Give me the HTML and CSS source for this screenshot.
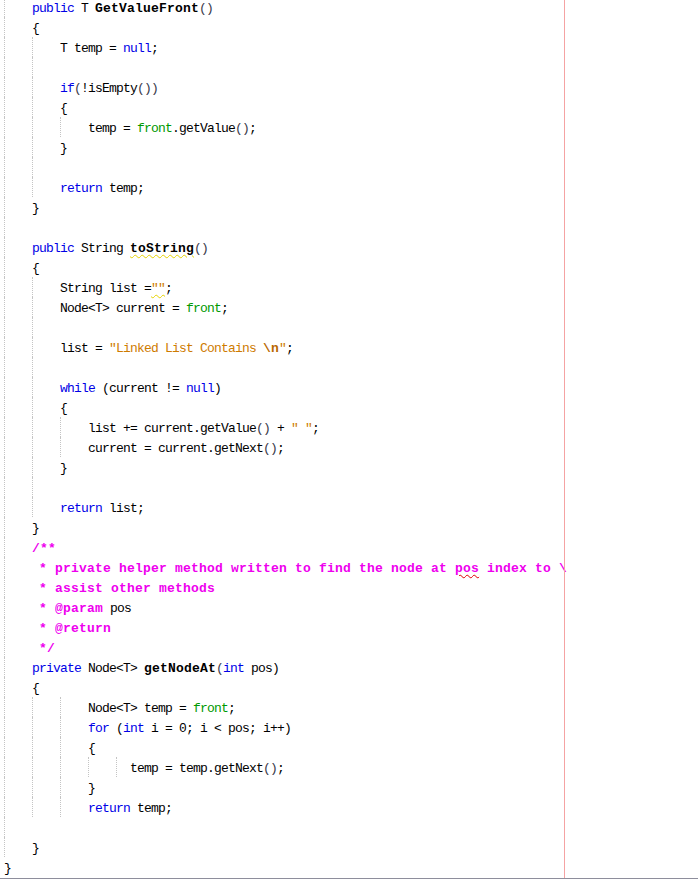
FILE: index.html
```html
<!DOCTYPE html>
<html>
<head>
<meta charset="utf-8">
<link rel="stylesheet" href="styles.css">
</head>
<body>
<div class="editor">
  <div class="code">
    <div class="ln"><span class="c g"></span><span class="t"><span class="kw">public</span> T <span class="b">GetValueFront</span><span class="p">()</span></span></div>
    <div class="ln"><span class="c g"></span><span class="t">{</span></div>
    <div class="ln"><span class="c g"></span><span class="c g"></span><span class="t">T temp = <span class="kw">null</span>;</span></div>
    <div class="ln"><span class="c g"></span><span class="c g"></span><span class="t"></span></div>
    <div class="ln"><span class="c g"></span><span class="c g"></span><span class="t"><span class="kw">if</span><span class="p">(</span>!isEmpty<span class="p">())</span></span></div>
    <div class="ln"><span class="c g"></span><span class="c g"></span><span class="t">{</span></div>
    <div class="ln"><span class="c g"></span><span class="c g"></span><span class="c g"></span><span class="t">temp = <span class="fd">front</span>.getValue<span class="p">()</span>;</span></div>
    <div class="ln"><span class="c g"></span><span class="c g"></span><span class="t">}</span></div>
    <div class="ln"><span class="c g"></span><span class="c g"></span><span class="t"></span></div>
    <div class="ln"><span class="c g"></span><span class="c g"></span><span class="t"><span class="kw">return</span> temp;</span></div>
    <div class="ln"><span class="c g"></span><span class="t">}</span></div>
    <div class="ln"><span class="c g"></span><span class="t"></span></div>
    <div class="ln"><span class="c g"></span><span class="t"><span class="kw">public</span> String <span class="b warn">toString</span><span class="p">()</span></span></div>
    <div class="ln"><span class="c g"></span><span class="t">{</span></div>
    <div class="ln"><span class="c g"></span><span class="c g"></span><span class="t">String list =<span class="st warn">""</span>;</span></div>
    <div class="ln"><span class="c g"></span><span class="c g"></span><span class="t">Node&lt;T&gt; current = <span class="fd">front</span>;</span></div>
    <div class="ln"><span class="c g"></span><span class="c g"></span><span class="t"></span></div>
    <div class="ln"><span class="c g"></span><span class="c g"></span><span class="t">list = <span class="st">"Linked List Contains <span class="esc">\n</span>"</span>;</span></div>
    <div class="ln"><span class="c g"></span><span class="c g"></span><span class="t"></span></div>
    <div class="ln"><span class="c g"></span><span class="c g"></span><span class="t"><span class="kw">while</span> (current != <span class="kw">null</span>)</span></div>
    <div class="ln"><span class="c g"></span><span class="c g"></span><span class="t">{</span></div>
    <div class="ln"><span class="c g"></span><span class="c g"></span><span class="c g"></span><span class="t">list += current.getValue<span class="p">()</span> + <span class="st">" "</span>;</span></div>
    <div class="ln"><span class="c g"></span><span class="c g"></span><span class="c g"></span><span class="t">current = current.getNext<span class="p">()</span>;</span></div>
    <div class="ln"><span class="c g"></span><span class="c g"></span><span class="t">}</span></div>
    <div class="ln"><span class="c g"></span><span class="c g"></span><span class="t"></span></div>
    <div class="ln"><span class="c g"></span><span class="c g"></span><span class="t"><span class="kw">return</span> list;</span></div>
    <div class="ln"><span class="c g"></span><span class="t">}</span></div>
    <div class="ln"><span class="c g"></span><span class="t"><span class="cm">/**</span></span></div>
    <div class="ln"><span class="c g"></span><span class="t"><span class="cmn"> </span><span class="cm">* private helper method written to find the node at <span class="err">pos</span> index to \</span></span></div>
    <div class="ln"><span class="c g"></span><span class="t"><span class="cmn"> </span><span class="cm">* assist other methods</span></span></div>
    <div class="ln"><span class="c g"></span><span class="t"><span class="cmn"> </span><span class="cm">* @param</span> pos</span></div>
    <div class="ln"><span class="c g"></span><span class="t"><span class="cmn"> </span><span class="cm">* @return</span></span></div>
    <div class="ln"><span class="c g"></span><span class="t"><span class="cmn"> </span><span class="cm">*/</span></span></div>
    <div class="ln"><span class="c g"></span><span class="t"><span class="kw">private</span> Node&lt;T&gt; <span class="b">getNodeAt</span><span class="p">(</span><span class="kw">int</span> pos)</span></div>
    <div class="ln"><span class="c g"></span><span class="t">{</span></div>
    <div class="ln"><span class="c g"></span><span class="c g"></span><span class="c g"></span><span class="t">Node&lt;T&gt; temp = <span class="fd">front</span>;</span></div>
    <div class="ln"><span class="c g"></span><span class="c g"></span><span class="c g"></span><span class="t"><span class="kw">for</span> (<span class="kw">int</span> i = 0; i &lt; pos; i++)</span></div>
    <div class="ln"><span class="c g"></span><span class="c g"></span><span class="c g"></span><span class="t">{</span></div>
    <div class="ln"><span class="c g"></span><span class="c g"></span><span class="c g"></span><span class="c g"></span><span class="c half g"></span><span class="t">temp = temp.getNext<span class="p">()</span>;</span></div>
    <div class="ln"><span class="c g"></span><span class="c g"></span><span class="c g"></span><span class="t">}</span></div>
    <div class="ln"><span class="c g"></span><span class="c g"></span><span class="c g"></span><span class="t"><span class="kw">return</span> temp;</span></div>
    <div class="ln"><span class="c g"></span><span class="t"></span></div>
    <div class="ln"><span class="c g"></span><span class="t">}</span></div>
    <div class="ln"><span class="t">}</span></div>
  </div>
  <div class="margin"></div>
</div>
</body>
</html>
```

FILE: styles.css
```css
html, body {
  margin: 0;
  padding: 0;
  background: #ffffff;
}

.editor {
  position: relative;
  height: 878px;
  border-bottom: 1px solid #8e8e9c;
  overflow: hidden;
  font-family: "Liberation Mono", "DejaVu Sans Mono", monospace;
  font-size: 13px;
  letter-spacing: -0.8px;
  color: #000000;
}

.code {
  margin-top: -3px;
  padding-left: 4px;
}

.ln {
  display: flex;
  height: 20px;
  line-height: 20px;
}

.t {
  white-space: pre;
  padding-top: 2px;
}

.c {
  flex: none;
  width: 28px;
  height: 20px;
  box-sizing: border-box;
}

.c.half {
  width: 14px;
}

.g {
  border-left: 1px dotted #c4c4c4;
}

.kw { color: #0000e6; }
.fd { color: #009900; }
.st { color: #ce7b00; }
.p { color: #3a3a4a; }

.esc {
  font-weight: bold;
  letter-spacing: 0.2px;
  color: #b86800;
}

.b {
  font-weight: bold;
  letter-spacing: 0.2px;
}

.cm {
  color: #ee00ee;
  font-weight: bold;
  letter-spacing: 0.2px;
}

.warn {
  text-decoration: underline wavy #e6d200;
  text-decoration-thickness: 1px;
  text-underline-offset: 2px;
}

.err {
  text-decoration: underline wavy #e00000;
  text-decoration-thickness: 1px;
  text-underline-offset: 2px;
}

.margin {
  position: absolute;
  left: 564px;
  top: 0;
  bottom: 0;
  width: 1px;
  background: #f5a3a3;
}
```
